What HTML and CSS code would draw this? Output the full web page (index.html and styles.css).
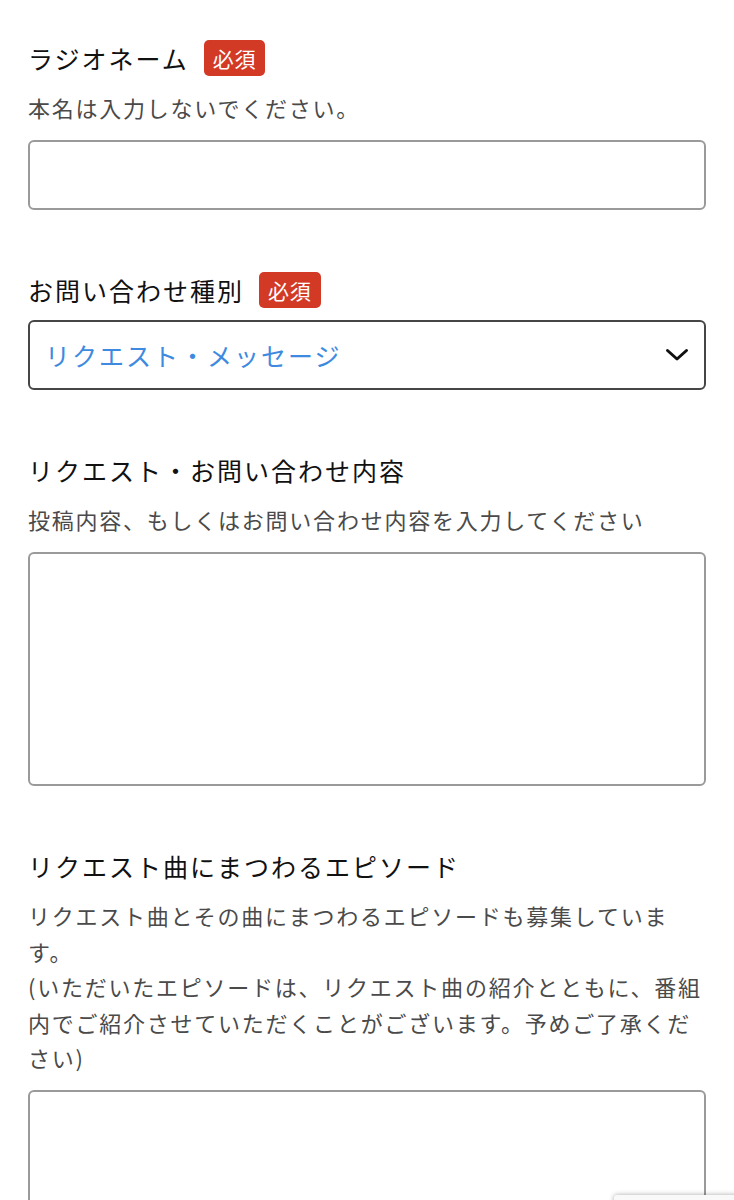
FILE: index.html
```html
<!DOCTYPE html>
<html lang="ja">
<head>
<meta charset="utf-8">
<title>お問い合わせ</title>
<link rel="stylesheet" href="styles.css">
</head>
<body>
<form class="form">
  <div class="field">
    <div class="label-row"><span class="label">ラジオネーム</span><span class="badge">必須</span></div>
    <p class="help">本名は入力しないでください。</p>
    <div class="input"></div>
  </div>
  <div class="field">
    <div class="label-row tight"><span class="label">お問い合わせ種別</span><span class="badge">必須</span></div>
    <div class="select">
      <span class="select-text">リクエスト・メッセージ</span>
      <svg class="chev" width="24" height="14" viewBox="0 0 24 14"><path d="M2.5 2.5 L12 11 L21.5 2.5" fill="none" stroke="#111" stroke-width="3" stroke-linecap="round" stroke-linejoin="round"/></svg>
    </div>
  </div>
  <div class="field">
    <div class="label-row"><span class="label">リクエスト・お問い合わせ内容</span></div>
    <p class="help">投稿内容、もしくはお問い合わせ内容を入力してください</p>
    <div class="input textarea"></div>
  </div>
  <div class="field">
    <div class="label-row"><span class="label">リクエスト曲にまつわるエピソード</span></div>
    <p class="help">リクエスト曲とその曲にまつわるエピソードも募集しています。<br>(いただいたエピソードは、リクエスト曲の紹介とともに、番組内でご紹介させていただくことがございます。予めご了承ください)</p>
    <div class="input textarea"></div>
  </div>
</form>
<div class="captcha"></div>
</body>
</html>
```

FILE: styles.css
```css
html, body {
  margin: 0;
  padding: 0;
  background: #fff;
}
body {
  font-family: "Noto Sans CJK JP", "Noto Sans", sans-serif;
  color: #111;
}
.form {
  padding: 40px 28px 0 28px;
  display: flex;
  flex-direction: column;
  gap: 62px;
}
.field {
  display: flex;
  flex-direction: column;
}
.label-row {
  height: 36px;
  display: flex;
  align-items: center;
  gap: 15px;
  margin-bottom: 14px;
}
.label-row.tight {
  margin-bottom: 12px;
}
.label {
  font-size: 25px;
  letter-spacing: 0.08em;
  line-height: 36px;
  color: #111;
}
.badge {
  background: #d33a26;
  color: #fff;
  font-size: 21px;
  line-height: 36px;
  height: 36px;
  padding: 0 9px;
  border-radius: 5px;
  letter-spacing: 0.04em;
}
.help {
  margin: 0 0 14.5px 0;
  font-size: 22px;
  line-height: 35.5px;
  letter-spacing: 0.08em;
  color: #4a4a4a;
}
.input {
  height: 70px;
  box-sizing: border-box;
  border: 2px solid #9a9a9a;
  border-radius: 6px;
  background: #fff;
}
.textarea {
  height: 234px;
}
.select {
  height: 70px;
  box-sizing: border-box;
  border: 2px solid #464646;
  border-radius: 6px;
  display: flex;
  align-items: center;
  justify-content: space-between;
  padding: 0 15px 0 15px;
}
.select-text {
  font-size: 25px;
  letter-spacing: 0.08em;
  color: #3d8ae0;
}
.chev {
  display: block;
}
.captcha {
  position: fixed;
  left: 614px;
  top: 1195px;
  width: 256px;
  height: 60px;
  background: #f9f9f9;
  border-radius: 3px;
  box-shadow: 0 0 5px rgba(0,0,0,0.35);
}
```
